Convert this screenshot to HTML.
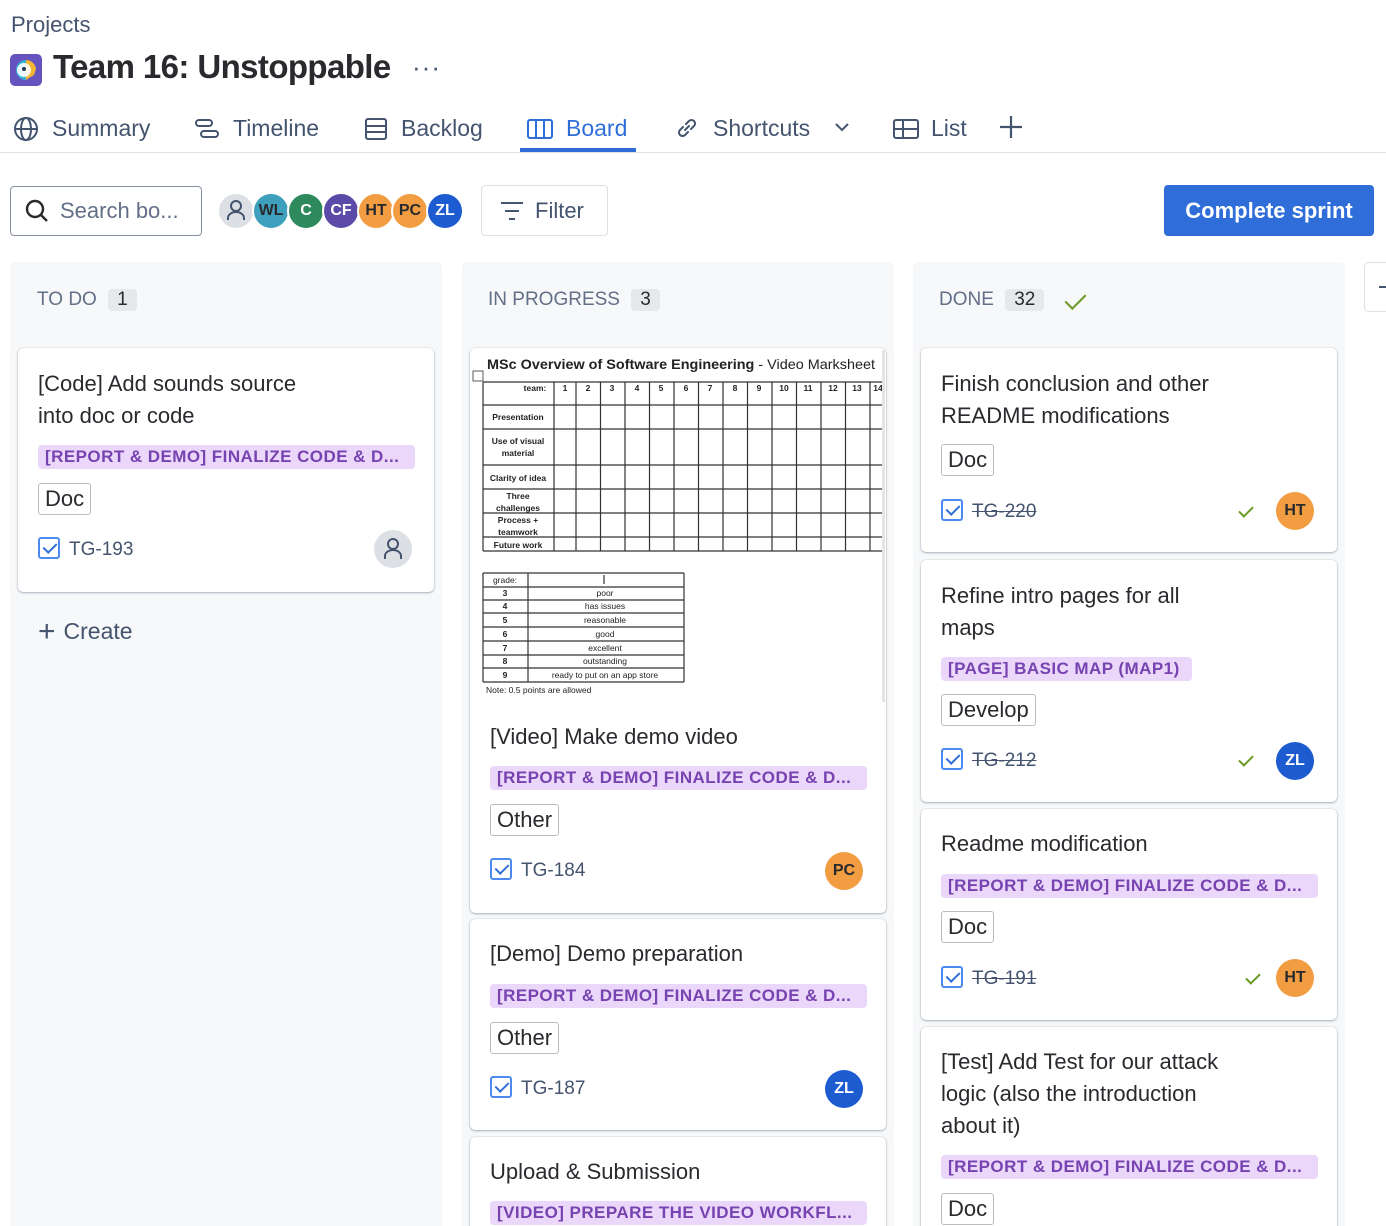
<!DOCTYPE html>
<html><head><meta charset="utf-8"><style>
*{box-sizing:border-box;margin:0;padding:0}
html,body{width:1386px;height:1226px;overflow:hidden}
body{background:#fff;font-family:"Liberation Sans",sans-serif;color:#292a2e;position:relative}
.a{position:absolute}
.tab{position:absolute;top:113px;font-size:23px;color:#44546f;height:30px;line-height:30px;white-space:nowrap}
.tab svg{position:absolute;top:3px}
.col{position:absolute;top:262px;width:432px;height:964px;background:#f7f8f9;border-radius:6px 6px 0 0}
.colh{position:absolute;top:289px;font-size:19px;color:#626f86;line-height:22px;white-space:nowrap}
.cnt{display:inline-block;background:#e6e8eb;color:#292a2e;border-radius:4px;padding:0 9px;margin-left:6px;font-size:19px}
.card{position:absolute;width:416px;background:#fff;border-radius:5px;box-shadow:0 1px 2px rgba(9,30,66,.3),0 0 1px rgba(9,30,66,.3)}
.t{position:absolute;left:20px;font-size:22px;line-height:32px;color:#292a2e;width:330px}
.lb{position:absolute;left:20px;height:24px;line-height:24px;background:#ead7f9;color:#7743b0;font-weight:bold;font-size:17px;letter-spacing:0.45px;border-radius:4px;padding:0 7px;white-space:nowrap;width:377px;overflow:hidden}
.tg{position:absolute;left:20px;height:32px;line-height:30px;border:1px solid #b8bcc3;border-radius:3px;font-size:22px;padding:0 6px;color:#292a2e}
.key{position:absolute;left:20px;font-size:19px;color:#44546f;line-height:24px;white-space:nowrap}
.key .cb{display:inline-block;width:22px;height:22px;border:2px solid #4c8af0;border-radius:3px;vertical-align:-4px;margin-right:9px;position:relative}
.key .cb:after{content:"";position:absolute;left:6px;top:1px;width:6px;height:11px;border:solid #2f6ed8;border-width:0 2px 2px 0;transform:rotate(45deg)}
.key s{text-decoration:line-through}
.av{position:absolute;width:38px;height:38px;border-radius:50%;color:#292a2e;font-weight:bold;font-size:16px;text-align:center;line-height:38px}
.ok{position:absolute;width:8px;height:14px;border:solid #6a9a23;border-width:0 2px 2px 0;transform:rotate(45deg)}
.hav{position:absolute;top:192px;width:38px;height:38px;border-radius:50%;border:2px solid #fff;color:#fff;font-weight:bold;font-size:16px;text-align:center;line-height:34px}
</style></head><body>

<div class="a" style="left:11px;top:12px;font-size:22px;color:#44546f">Projects</div>
<svg class="a" style="left:10px;top:54px" width="32" height="32" viewBox="0 0 32 32"><rect width="32" height="32" rx="5" fill="#6554c0"/><path d="M16 6a10 10 0 0 0 0 20z" fill="#36b2d6"/><path d="M16 6a10 10 0 0 1 10 9l-2 6-8 5z" fill="#f5b731"/><circle cx="14" cy="16" r="7" fill="#fff" opacity=".9"/><circle cx="14" cy="15" r="2" fill="#253858"/></svg>
<div class="a" style="left:53px;top:48px;font-size:33px;font-weight:bold;color:#292a2e;letter-spacing:-0.6px">Team 16: Unstoppable</div>
<div class="a" style="left:412px;top:52px;font-size:26px;color:#44546f;letter-spacing:1px">···</div>

<div class="tab" style="left:13px"><svg width="26" height="26" viewBox="0 0 26 26" fill="none" stroke="#44546f" stroke-width="2"><circle cx="13" cy="13" r="11"/><ellipse cx="13" cy="13" rx="5" ry="11"/><path d="M2 13h22"/></svg><span style="margin-left:39px">Summary</span></div>
<div class="tab" style="left:194px"><svg width="26" height="26" viewBox="0 0 26 26" fill="none" stroke="#44546f" stroke-width="2"><rect x="2" y="4" width="16" height="6" rx="3"/><rect x="7" y="15" width="17" height="6" rx="3"/></svg><span style="margin-left:39px">Timeline</span></div>
<div class="tab" style="left:363px"><svg width="26" height="26" viewBox="0 0 26 26" fill="none" stroke="#44546f" stroke-width="2"><rect x="3" y="3" width="20" height="20" rx="2"/><path d="M3 10h20M3 16h20"/></svg><span style="margin-left:38px">Backlog</span></div>
<div class="tab" style="left:527px;color:#2f6ed8"><svg width="26" height="26" viewBox="0 0 26 26" fill="none" stroke="#2f6ed8" stroke-width="2"><rect x="1" y="4" width="24" height="18" rx="2"/><path d="M9 4v18M17 4v18"/></svg><span style="margin-left:39px">Board</span></div>
<div class="a" style="left:520px;top:148px;width:116px;height:4px;background:#2f6ed8"></div>
<div class="tab" style="left:675px"><svg width="24" height="24" viewBox="0 0 24 24" fill="none" stroke="#44546f" stroke-width="2" stroke-linecap="round"><path d="M10 14l4-4M8 11l-3 3a3.5 3.5 0 0 0 5 5l3-3M16 13l3-3a3.5 3.5 0 0 0-5-5l-3 3"/></svg><span style="margin-left:38px">Shortcuts</span><svg style="left:159px;top:8px" width="16" height="12" viewBox="0 0 16 12" fill="none" stroke="#44546f" stroke-width="2"><path d="M2 3l6 6 6-6"/></svg></div>
<div class="tab" style="left:893px"><svg width="26" height="26" viewBox="0 0 26 26" fill="none" stroke="#44546f" stroke-width="2"><rect x="1" y="4" width="24" height="18" rx="2"/><path d="M1 13h24M10 4v18"/></svg><span style="margin-left:38px">List</span></div>
<svg class="a" style="left:999px;top:115px" width="24" height="24" viewBox="0 0 24 24" stroke="#44546f" stroke-width="2.2"><path d="M12 1v22M1 12h22"/></svg>
<div class="a" style="left:0;top:152px;width:1386px;height:1px;background:#dcdfe4"></div>

<div class="a" style="left:10px;top:186px;width:192px;height:50px;border:1px solid #8590a2;border-radius:4px"></div>
<svg class="a" style="left:24px;top:198px" width="26" height="26" viewBox="0 0 26 26" fill="none" stroke="#292a2e" stroke-width="2.4"><circle cx="11" cy="11" r="8"/><path d="M17 17l6 6"/></svg>
<div class="a" style="left:60px;top:198px;font-size:22px;color:#626f86">Search bo...</div>

<div class="hav" style="left:217px;background:#dcdfe4"><svg width="34" height="34" viewBox="0 0 34 34" fill="none" stroke="#44546f" stroke-width="2"><circle cx="17" cy="12" r="5"/><path d="M9 26v-2a8 6 0 0 1 16 0v2"/></svg></div>
<div class="hav" style="left:252px;background:#3fa0bd;color:#292a2e">WL</div>
<div class="hav" style="left:287px;background:#2e8a5c">C</div>
<div class="hav" style="left:322px;background:#5c4aa8">CF</div>
<div class="hav" style="left:357px;background:#f29d41;color:#292a2e">HT</div>
<div class="hav" style="left:391px;background:#f29d41;color:#292a2e">PC</div>
<div class="hav" style="left:426px;background:#1d5bd1">ZL</div>

<div class="a" style="left:481px;top:185px;width:127px;height:51px;border:1px solid #dcdfe4;border-radius:4px"></div>
<svg class="a" style="left:500px;top:200px" width="24" height="22" viewBox="0 0 24 22" stroke="#44546f" stroke-width="2"><path d="M1 3h22M5 11h14M9 19h6"/></svg>
<div class="a" style="left:535px;top:198px;font-size:22px;color:#44546f">Filter</div>

<div class="a" style="left:1164px;top:185px;width:210px;height:51px;background:#2f6ed8;border-radius:4px;color:#fff;font-size:22px;font-weight:bold;text-align:center;line-height:51px">Complete sprint</div>

<div class="col" style="left:10px"></div>
<div class="col" style="left:462px"></div>
<div class="col" style="left:913px"></div>
<div class="a" style="left:1364px;top:262px;width:40px;height:50px;border:1px solid #dcdfe4;border-radius:5px"></div>
<div class="a" style="left:1379px;top:286px;width:10px;height:2px;background:#44546f"></div>

<div class="colh" style="left:37px">TO DO <span class="cnt">1</span></div>
<div class="colh" style="left:488px">IN PROGRESS <span class="cnt">3</span></div>
<div class="colh" style="left:939px">DONE <span class="cnt">32</span></div>
<div class="ok" style="left:1070px;top:289px;width:11px;height:20px"></div>

<!-- TODO -->
<div class="card" style="left:18px;top:348px;height:244px">
<div class="t" style="top:20px;width:295px">[Code] Add sounds source into doc or code</div>
<div class="lb" style="top:97px">[REPORT &amp; DEMO] FINALIZE CODE &amp; D...</div>
<div class="tg" style="top:135px">Doc</div>
<div class="key" style="top:189px"><span class="cb"></span>TG-193</div>
<div class="av" style="left:356px;top:182px;background:#dcdfe4"><svg width="38" height="38" viewBox="0 0 38 38" fill="none" stroke="#44546f" stroke-width="2"><circle cx="19" cy="14" r="5"/><path d="M11 29v-3a8 6 0 0 1 16 0v3"/></svg></div>
</div>
<div class="a" style="left:38px;top:613px;font-size:23px;color:#44546f"><span style="font-size:30px;position:relative;top:2px;margin-right:8px">+</span>Create</div>

<!-- IN PROGRESS -->
<div class="card" style="left:470px;top:348px;height:565px">
<svg class="a" style="left:0;top:0" width="416" height="360" viewBox="470 348 416 360" font-family="Liberation Sans" fill="#222">
<text x="487" y="369" font-size="14" font-weight="bold" textLength="388" lengthAdjust="spacingAndGlyphs">MSc Overview of Software Engineering <tspan font-weight="normal">- Video Marksheet</tspan></text>
<rect x="473" y="371" width="10" height="10" fill="none" stroke="#333" stroke-width="0.8"/>
<g stroke="#333" stroke-width="1.2" fill="none">
<path d="M483 382H882M483 405H882M483 429H882M483 465H882M483 489H882M483 513H882M483 537H882M483 551H882"/>
<path d="M483 382V551M554 382V551M576 382V551M600.5 382V551M625 382V551M649.5 382V551M674 382V551M698.5 382V551M723 382V551M747.5 382V551M772 382V551M796.5 382V551M821 382V551M845.5 382V551M870 382V551"/>
<path d="M483 573H684M483 587H684M483 600H684M483 613H684M483 627H684M483 641H684M483 655H684M483 668H684M483 682H684M483 573V682M528 573V682M684 573V682M604 575V584"/>
</g>
<g font-size="8.5" font-weight="bold" text-anchor="middle">
<text x="535" y="391">team:</text>
<text x="565" y="391">1</text><text x="588" y="391">2</text><text x="612" y="391">3</text><text x="637" y="391">4</text><text x="661" y="391">5</text><text x="686" y="391">6</text><text x="710" y="391">7</text><text x="735" y="391">8</text><text x="759" y="391">9</text><text x="784" y="391">10</text><text x="808" y="391">11</text><text x="833" y="391">12</text><text x="857" y="391">13</text><text x="878" y="391">14</text>
<text x="518" y="420">Presentation</text>
<text x="518" y="444">Use of visual</text><text x="518" y="456">material</text>
<text x="518" y="481">Clarity of idea</text>
<text x="518" y="499">Three</text><text x="518" y="511">challenges</text>
<text x="518" y="523">Process +</text><text x="518" y="535">teamwork</text>
<text x="518" y="548">Future work</text>
</g>
<g font-size="8.5" text-anchor="middle">
<text x="505" y="583">grade:</text>
<g font-weight="bold"><text x="505" y="596">3</text><text x="505" y="609">4</text><text x="505" y="623">5</text><text x="505" y="637">6</text><text x="505" y="651">7</text><text x="505" y="664">8</text><text x="505" y="678">9</text></g>
<text x="605" y="596">poor</text><text x="605" y="609">has issues</text><text x="605" y="623">reasonable</text><text x="605" y="637">good</text><text x="605" y="651">excellent</text><text x="605" y="664">outstanding</text><text x="605" y="678">ready to put on an app store</text>
<text x="486" y="693" text-anchor="start">Note: 0.5 points are allowed</text>
</g>
<rect x="882" y="350" width="3" height="352" fill="#e4e4e4"/>
</svg>
<div class="t" style="top:373px">[Video] Make demo video</div>
<div class="lb" style="top:418px">[REPORT &amp; DEMO] FINALIZE CODE &amp; D...</div>
<div class="tg" style="top:456px">Other</div>
<div class="key" style="top:510px"><span class="cb"></span>TG-184</div>
<div class="av" style="left:355px;top:504px;background:#f29d41">PC</div>
</div>

<div class="card" style="left:470px;top:919px;height:211px">
<div class="t" style="top:19px">[Demo] Demo preparation</div>
<div class="lb" style="top:65px">[REPORT &amp; DEMO] FINALIZE CODE &amp; D...</div>
<div class="tg" style="top:103px">Other</div>
<div class="key" style="top:157px"><span class="cb"></span>TG-187</div>
<div class="av" style="left:355px;top:151px;background:#1d5bd1;color:#fff">ZL</div>
</div>

<div class="card" style="left:470px;top:1137px;height:120px">
<div class="t" style="top:19px">Upload &amp; Submission</div>
<div class="lb" style="top:64px">[VIDEO] PREPARE THE VIDEO WORKFL...</div>
</div>

<!-- DONE -->
<div class="card" style="left:921px;top:348px;height:204px">
<div class="t" style="top:20px;width:300px">Finish conclusion and other README modifications</div>
<div class="tg" style="top:96px">Doc</div>
<div class="key" style="top:151px"><span class="cb"></span><s>TG-220</s></div>
<div class="ok" style="left:321px;top:155px"></div>
<div class="av" style="left:355px;top:144px;background:#f29d41">HT</div>
</div>

<div class="card" style="left:921px;top:560px;height:242px">
<div class="t" style="top:20px;width:270px">Refine intro pages for all maps</div>
<div class="lb" style="top:97px;width:251px">[PAGE] BASIC MAP (MAP1)</div>
<div class="tg" style="top:134px">Develop</div>
<div class="key" style="top:188px"><span class="cb"></span><s>TG-212</s></div>
<div class="ok" style="left:321px;top:192px"></div>
<div class="av" style="left:355px;top:182px;background:#1d5bd1;color:#fff">ZL</div>
</div>

<div class="card" style="left:921px;top:809px;height:211px">
<div class="t" style="top:19px">Readme modification</div>
<div class="lb" style="top:65px">[REPORT &amp; DEMO] FINALIZE CODE &amp; D...</div>
<div class="tg" style="top:102px">Doc</div>
<div class="key" style="top:157px"><span class="cb"></span><s>TG-191</s></div>
<div class="ok" style="left:328px;top:161px"></div>
<div class="av" style="left:355px;top:150px;background:#f29d41">HT</div>
</div>

<div class="card" style="left:921px;top:1027px;height:230px">
<div class="t" style="top:19px;width:300px">[Test] Add Test for our attack logic (also the introduction about it)</div>
<div class="lb" style="top:128px">[REPORT &amp; DEMO] FINALIZE CODE &amp; D...</div>
<div class="tg" style="top:166px">Doc</div>
</div>

</body></html>
